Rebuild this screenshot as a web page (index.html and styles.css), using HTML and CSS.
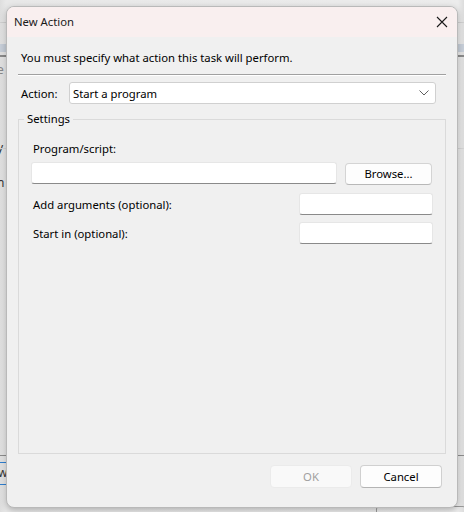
FILE: index.html
```html
<!DOCTYPE html>
<html>
<head>
<meta charset="utf-8">
<link rel="stylesheet" href="styles.css">
</head>
<body>
<div class="desktop">
  <div class="bg-window">
    <div class="bg-line bg-l1"></div>
    <div class="bg-band"></div>
    <div class="bg-line bg-l2"></div>
    <span class="bg-char bg-c1">e</span>
    <span class="bg-char bg-c2">y</span>
    <span class="bg-char bg-c3">n</span>
    <div class="bg-line bg-l3"></div>
    <div class="bg-line bg-l4"></div>
    <div class="bg-blue bg-b1"></div>
    <span class="bg-char bg-c4">w</span>
    <div class="bg-blue bg-b2"></div>
    <div class="bg-box"></div>
  </div>

  <div class="dialog">
    <div class="titlebar">
      <span class="title">New Action</span>
      <svg class="close" width="12" height="12" viewBox="0 0 12 12">
        <path d="M1 1 L11 11 M11 1 L1 11" stroke="#1a1a1a" stroke-width="1.1" fill="none"/>
      </svg>
    </div>
    <div class="content">
      <p class="instruction">You must specify what action this task will perform.</p>
      <div class="separator"></div>
      <div class="action-row">
        <span class="label action-label">Action:</span>
        <div class="combo">
          <span>Start a program</span>
          <svg class="chev" width="10" height="6" viewBox="0 0 10 6">
            <path d="M0.5 0.5 L5 5 L9.5 0.5" stroke="#606060" stroke-width="1" fill="none"/>
          </svg>
        </div>
      </div>
      <fieldset class="group">
        <legend class="legend">Settings</legend>
        <div class="group-inner">
          <div class="label prog-label">Program/script:</div>
          <div class="prog-row">
            <div class="textbox prog-input"></div>
            <div class="button browse">Browse...</div>
          </div>
          <div class="opt-row first">
            <span class="label opt-label">Add arguments (optional):</span>
            <div class="textbox opt-input"></div>
          </div>
          <div class="opt-row">
            <span class="label opt-label">Start in (optional):</span>
            <div class="textbox opt-input"></div>
          </div>
        </div>
      </fieldset>
      <div class="buttons">
        <div class="button ok">OK</div>
        <div class="button cancel">Cancel</div>
      </div>
    </div>
  </div>
</div>
</body>
</html>
```

FILE: styles.css
```css
* { box-sizing: border-box; }
html, body { margin: 0; padding: 0; }
body {
  font-family: "Noto Sans", "Open Sans", sans-serif;
  font-size: 11.3px;
  color: #000;
  background: #e4e4e4;
}
.desktop {
  position: relative;
  width: 464px;
  height: 512px;
  overflow: hidden;
  background: linear-gradient(to right, #dedede 0px, #e8e8e8 6px, #ececec 458px, #dcdcdc 464px);
}
.bg-window { position: absolute; inset: 0; }
.bg-line { position: absolute; left: 0; right: 0; height: 1px; background: #c4c4c4; }
.bg-l1 { top: 22px; background: #cfcfcf; }
.bg-band { position: absolute; left: 0; right: 0; top: 44px; height: 8px; background: #c6ced8; }
.bg-l2 { top: 55px; height: 2px; background: #8a8a8a; }
.bg-l3 { top: 455px; background: #8c8c8c; }
.bg-l4 { top: 148px; background: #d4d4d4; }
.bg-blue { position: absolute; left: 0; width: 30px; height: 1px; background: #2f7fd0; }
.bg-b1 { top: 462px; }
.bg-b2 { top: 484px; }
.bg-char { position: absolute; left: -3px; font-size: 12px; color: #333; line-height: 14px; }
.bg-c1 { top: 63px; color: #888; }
.bg-c2 { top: 141px; }
.bg-c3 { top: 176px; }
.bg-c4 { top: 466px; left: -2px; }
.bg-box { position: absolute; left: 376px; top: 506px; width: 90px; height: 20px; border: 1px solid #9a9a9a; border-radius: 3px; }

.dialog {
  position: absolute;
  left: 6px;
  top: 6px;
  width: 452px;
  height: 502px;
  background: #f0f0f0;
  border: 1px solid #b9b9b9;
  border-radius: 8px;
  overflow: hidden;
  display: flex;
  flex-direction: column;
  box-shadow: 0 2px 6px rgba(0,0,0,0.25);
}
.titlebar {
  height: 30px;
  flex: none;
  background: #f9efef;
  display: flex;
  align-items: center;
  justify-content: space-between;
  padding: 0 9px 1px 7px;
}
.title { color: #1a1a1a; }
.close { display: block; margin-top: 0; }

.content {
  flex: 1;
  display: flex;
  flex-direction: column;
  padding: 0 0 19px 0;
}
.instruction {
  margin: 13px 0 0 14px;
  line-height: 16px;
  color: #000;
}
.separator {
  margin: 8px 11px 0 11px;
  border-top: 1px solid #a0a0a0;
  border-bottom: 1px solid #ffffff;
}
.label { line-height: 16px; white-space: nowrap; }
.action-row {
  margin: 6px 21px 0 14px;
  display: flex;
  align-items: center;
}
.action-label { width: 48px; flex: none; padding-top: 1px; }
.combo {
  flex: 1;
  height: 22px;
  background: #fff;
  border: 1px solid #d0d0d0;
  border-radius: 3px;
  display: flex;
  align-items: center;
  justify-content: space-between;
  padding: 0 6px 0 3px;
}
.chev { display: block; }

.group {
  flex: 1;
  margin: 7px 11px 0 11px;
  padding: 0;
  border: 1px solid #dadada;
  border-radius: 0;
  min-width: 0;
}
.legend {
  margin-left: 5px;
  padding: 0 3px;
  line-height: 16px;
}
.group-inner {
  padding: 14px 12px 0 12px;
  display: flex;
  flex-direction: column;
}
.prog-label { margin-left: 2px; }
.prog-row {
  margin-top: 5px;
  display: flex;
  align-items: flex-start;
  gap: 8px;
}
.textbox {
  height: 22px;
  background: #fff;
  border: 1px solid #e6e6e6;
  border-bottom-color: #8a8a8a;
  border-radius: 3px;
}
.prog-input { width: 306px; flex: none; }
.button {
  height: 22px;
  border-radius: 4px;
  display: flex;
  align-items: center;
  justify-content: center;
  line-height: 16px;
}
.browse {
  width: 87px;
  flex: none;
  margin-top: 1px;
  background: #fdfdfd;
  border: 1px solid #d4d4d4;
  border-bottom-color: #b8b8b8;
}
.opt-row {
  display: flex;
  align-items: center;
  justify-content: space-between;
  margin-top: 7px;
  padding-left: 2px;
}
.opt-label { padding-top: 2px; }
.opt-row.first { margin-top: 8px; }
.opt-input { width: 134px; }

.buttons {
  margin: 11px 15px 0 0;
  display: flex;
  justify-content: flex-end;
  gap: 8px;
}
.buttons .button { width: 82px; height: 23px; }
.ok {
  background: #f9f9f9;
  border: 1px solid #ebebeb;
  color: #a0a0a0;
}
.cancel {
  background: #fdfdfd;
  border: 1px solid #d0d0d0;
  border-bottom-color: #b4b4b4;
}
```
